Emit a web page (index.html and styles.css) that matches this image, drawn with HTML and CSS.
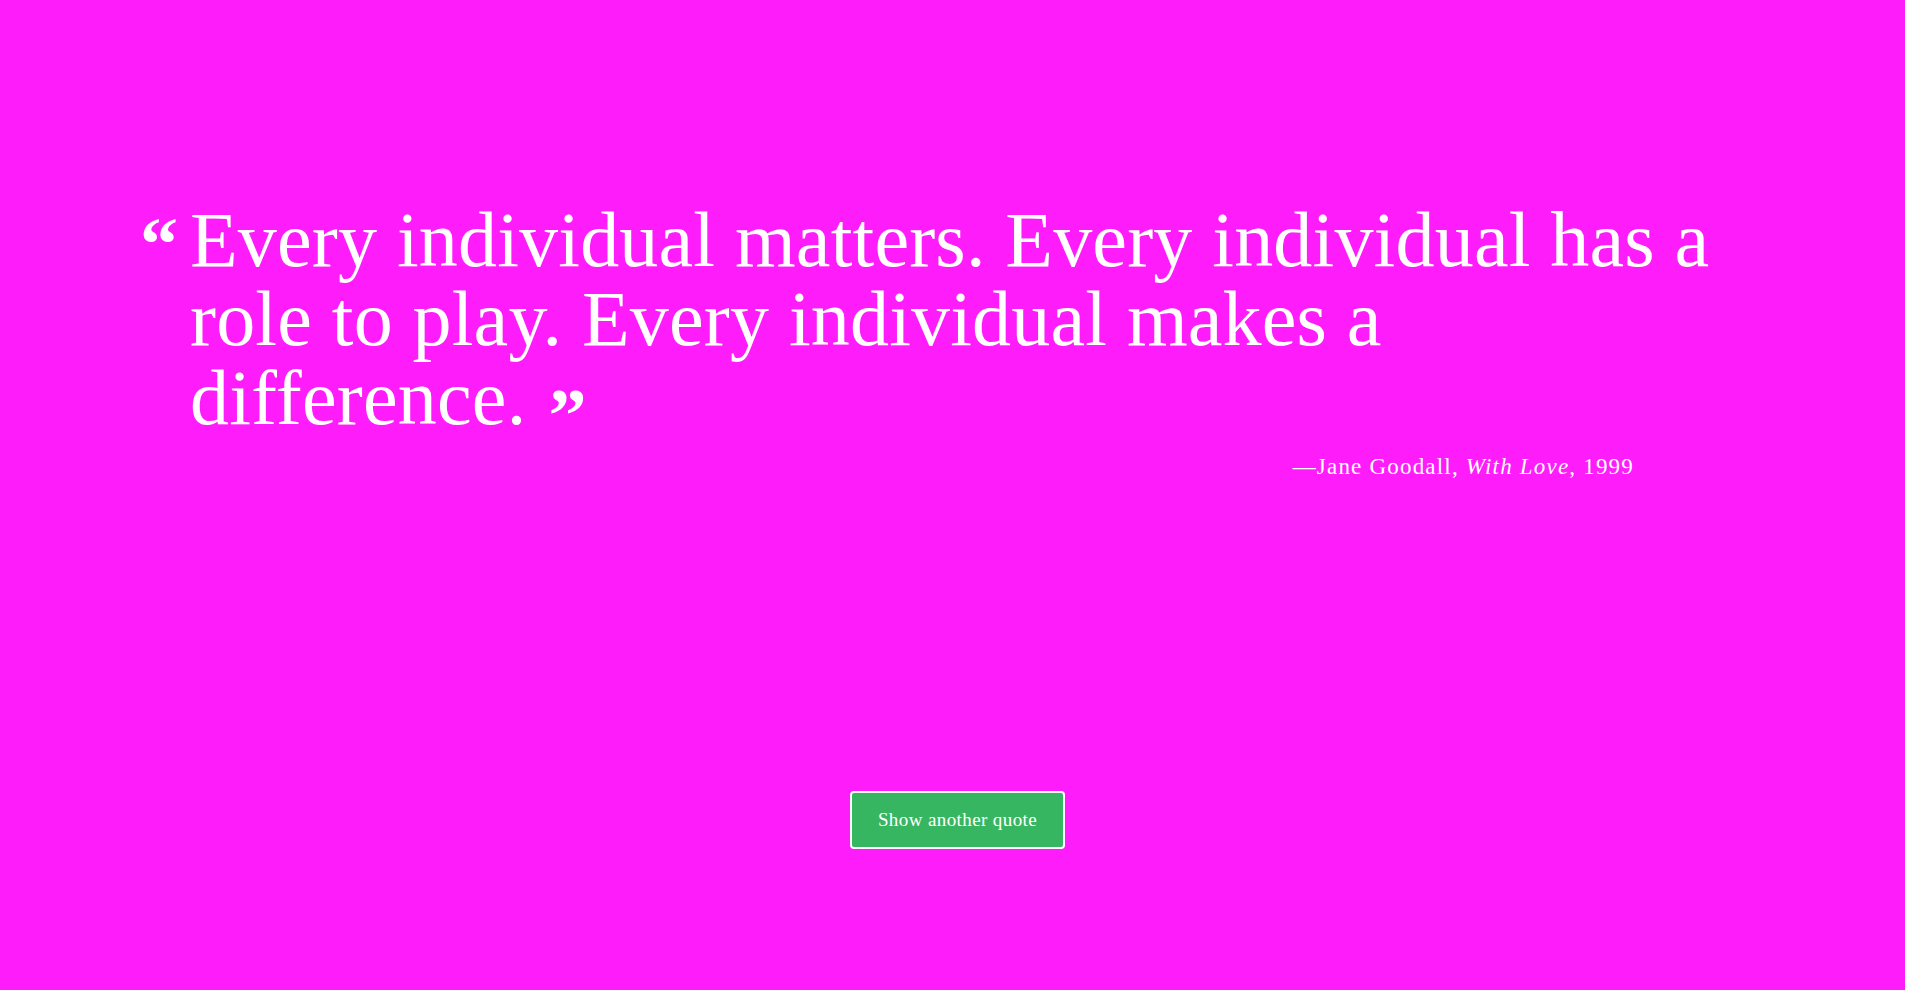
FILE: index.html
```html
<!DOCTYPE html>
<html lang="en">
<head>
<meta charset="utf-8">
<title>Random Quote</title>
<link rel="stylesheet" href="styles.css">
</head>
<body>
<main class="page">
  <figure class="quote-box">
    <blockquote class="quote">
      <span class="mark open">“</span>
      <p class="quote-text">Every individual matters. Every individual has a role to play. Every individual makes a difference.</p>
    </blockquote>
    <figcaption class="cite">—Jane Goodall, <em>With Love</em>, 1999</figcaption>
  </figure>
  <div class="actions">
    <button class="btn" type="button">Show another quote</button>
  </div>
</main>
</body>
</html>
```
FILE: styles.css
```css
html, body {
  margin: 0;
  padding: 0;
}
body {
  background: #ff1cfb;
  color: #ffffff;
  font-family: "Liberation Serif", "Times New Roman", serif;
  height: 990px;
  overflow: hidden;
}
.page {
  display: flex;
  flex-direction: column;
  align-items: center;
  padding-top: 200px;
}
.quote-box {
  margin: 0;
  width: 1625px;
  display: flex;
  flex-direction: column;
}
.quote {
  margin: 0;
  display: flex;
  align-items: flex-start;
}
.mark {
  font-weight: 700;
}
.mark.open {
  font-size: 76px;
  line-height: 1;
  width: 50px;
  flex: none;
  margin-top: 6px;
}
.quote-text {
  margin: 0;
  font-size: 78px;
  letter-spacing: 0.2px;
  line-height: 79px;
  width: 1560px;
}
.quote-text::after {
  content: "”";
  font-weight: 700;
  font-size: 76px;
  line-height: 0;
  margin-left: 22px;
  vertical-align: -17px;
  letter-spacing: 0;
}
.cite {
  align-self: flex-end;
  margin-right: 131px;
  margin-top: 13px;
  font-size: 23px;
  letter-spacing: 1.2px;
  line-height: 33px;
}
.cite em {
  font-style: italic;
}
.actions {
  margin-top: 308px;
  margin-left: 10px;
}
.btn {
  font-family: "Liberation Serif", "Times New Roman", serif;
  font-size: 19px;
  letter-spacing: 0.4px;
  color: #fff;
  background: #37b662;
  border: 2px solid #fff;
  border-radius: 4px;
  width: 215px;
  height: 58px;
  padding: 0;
  cursor: pointer;
}
```
